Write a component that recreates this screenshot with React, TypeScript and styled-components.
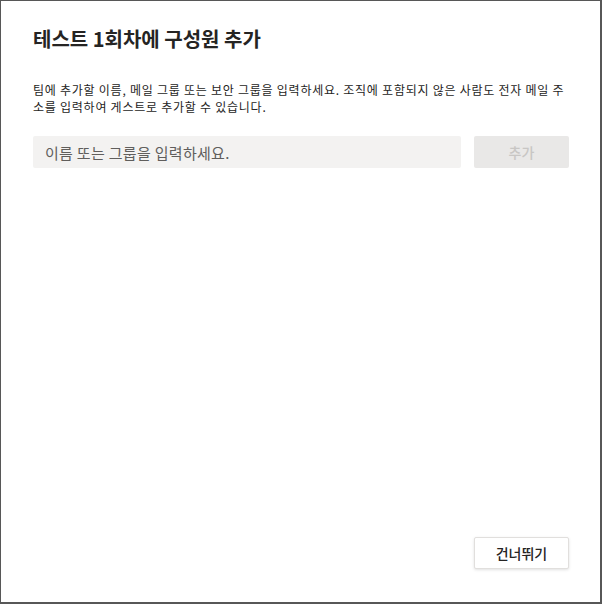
import React from "react";
import styled, { createGlobalStyle } from "styled-components";

const GlobalStyle = createGlobalStyle`
  html, body {
    margin: 0;
    padding: 0;
    background: #575757;
  }
  body {
    font-family: "Noto Sans CJK KR", "Noto Sans", sans-serif;
  }
`;

const Overlay = styled.div`
  width: 602px;
  height: 604px;
  padding: 1px 2px 2px 1px;
  box-sizing: border-box;
`;

const Dialog = styled.div`
  width: 100%;
  height: 100%;
  background: #fff;
  box-sizing: border-box;
  padding: 25px 31px 33px 32px;
  display: flex;
  flex-direction: column;
`;

const Title = styled.h1`
  margin: 0;
  font-size: 20px;
  line-height: 26px;
  font-weight: 700;
  color: #252423;
`;

const Description = styled.p`
  margin: 29px 0 0 0;
  font-size: 12px;
  line-height: 17px;
  color: #252423;
  letter-spacing: 0.75px;
  white-space: nowrap;
`;

const Row = styled.div`
  display: flex;
  gap: 13px;
  margin-top: 21px;
`;

const Input = styled.input`
  flex: 1;
  height: 32px;
  box-sizing: border-box;
  border: none;
  border-radius: 2px;
  background: #f3f2f1;
  padding: 0 12px;
  font-family: inherit;
  font-size: 15px;
  letter-spacing: 0.3px;
  color: #252423;
  outline: none;
  &::placeholder {
    color: #605e5c;
  }
`;

const Button = styled.button<{ $disabled?: boolean }>`
  width: 95px;
  height: 32px;
  box-sizing: border-box;
  border-radius: 2px;
  font-family: inherit;
  font-size: 14px;
  font-weight: 500;
  border: ${(p) => (p.$disabled ? "none" : "1px solid #e1dfdd")};
  background: ${(p) => (p.$disabled ? "#e9e8e7" : "#fff")};
  color: ${(p) => (p.$disabled ? "#c8c6c4" : "#252423")};
  box-shadow: ${(p) => (p.$disabled ? "none" : "0 1px 3px rgba(0,0,0,0.12)")};
  padding: 0;
`;

const Footer = styled.div`
  margin-top: auto;
  display: flex;
  justify-content: flex-end;
`;

export default function App() {
  return (
    <>
      <GlobalStyle />
      <Overlay>
        <Dialog>
          <Title>테스트 1회차에 구성원 추가</Title>
          <Description>
            팀에 추가할 이름, 메일 그룹 또는 보안 그룹을 입력하세요. 조직에 포함되지 않은 사람도 전자 메일 주
            <br />
            소를 입력하여 게스트로 추가할 수 있습니다.
          </Description>
          <Row>
            <Input placeholder="이름 또는 그룹을 입력하세요." />
            <Button $disabled>추가</Button>
          </Row>
          <Footer>
            <Button>건너뛰기</Button>
          </Footer>
        </Dialog>
      </Overlay>
    </>
  );
}
